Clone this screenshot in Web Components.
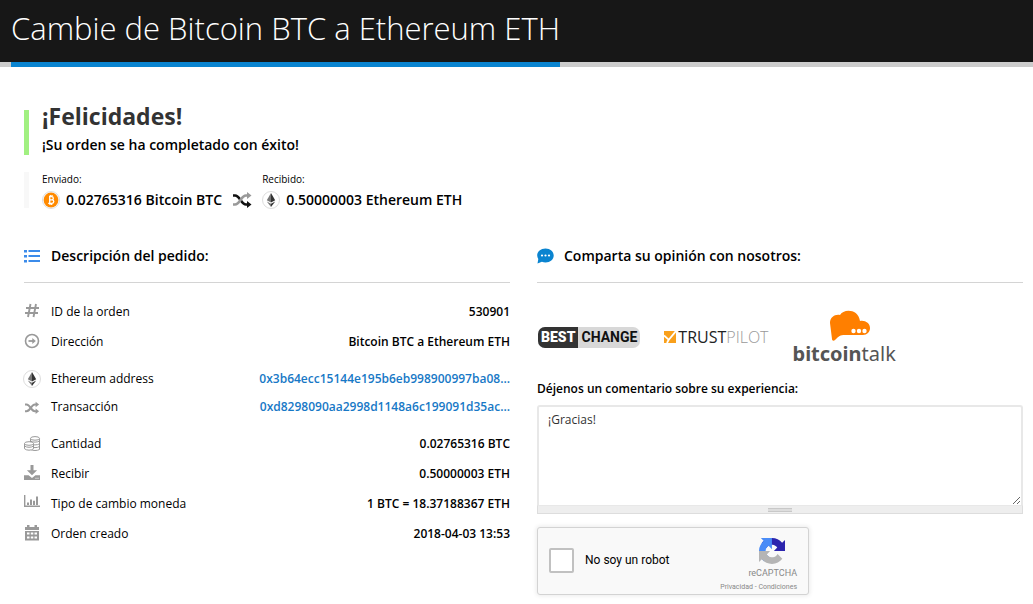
<!DOCTYPE html>
<html lang="es">
<head>
<meta charset="utf-8">
<meta name="viewport" content="width=device-width, initial-scale=1">
<title>Cambie de Bitcoin BTC a Ethereum ETH</title>
<style>
body { margin: 0; background: #fff; color: #000; font: 12px/20px "Open Sans", "Noto Sans", sans-serif; }
</style>
</head>
<body>
<order-page></order-page>
<script>
const define = (name, html, init) => {
  const template = document.createElement('template');
  template.innerHTML = html;
  customElements.define(name, class extends HTMLElement {
    constructor() {
      super();
      this.attachShadow({ mode: 'open' }).append(template.content.cloneNode(true));
    }
    connectedCallback() { if (init) init(this, this.shadowRoot); }
  });
};

const ethereum = `<circle cx="9" cy="9" r="8.5" fill="#fff" stroke="#ddd"/>
  <path d="M9 2 4.8 9.2 9 11.5Z" fill="#777"/><path d="M9 2v9.500l4.200-2.300Z" fill="#333"/>
  <path d="M4.800 10.400 9 16v-3.300Z" fill="#777"/><path d="M13.200 10.400 9 16v-3.300Z" fill="#333"/>`;

const shuffle = (a, b) => `<g fill="none" stroke-width="2.600">
  <path stroke="${b}" d="M0 4.500h2C7 4.500 8 13.500 13 13.500H15"/>
  <path stroke="${a}" d="M0 13.500h2C7 13.500 8 4.500 13 4.500H15"/></g>
  <path fill="${a}" d="M14 .9 18.500 4.500 14 8.100z"/><path fill="${b}" d="M14 9.900l4.500 3.600L14 17.100z"/>`;

const icons = {
  bitcoin: `<circle cx="9" cy="9" r="8.500" fill="#fff" stroke="#ddd"/><circle cx="9" cy="9" r="7.400" fill="#ff8a00"/>
    <g fill="none" stroke="#fff" stroke-width="1.300"><path d="M7 5.600h2.700a1.600 1.600 0 0 1 0 3.200H7.600 10a1.800 1.800 0 0 1 0 3.600H6.200M7.700 5.600v6.800M8.300 4v1.800M10 4v1.800M8 12.200V14M9.700 12.200V14"/></g>`,
  ethereum,
  swap: shuffle('#999', '#111'),
  shuffle: `<g transform="translate(2 3) scale(.76)">${shuffle('#999', '#999')}</g>`,
  list: `<g fill="#3b8bea"><path d="M1 3h3v2.500H1zM1 8h3v2.500H1zM1 13h3v2.500H1zM5.500 3H17v2H5.500zM5.500 8H17v2H5.500zM5.500 13H17v2H5.500z"/></g>`,
  comment: `<path fill="#0a84d0" d="M9.500 1.500c4.700 0 8.200 3 8.200 7s-3.500 7-8.200 7c-1.300 0-2.500-.2-3.600-.7L1.500 16.600l.8-4.500C1.600 11 1.200 9.800 1.200 8.500c0-4 3.600-7 8.300-7z"/><g fill="#fff"><circle cx="6" cy="8.500" r="1.100"/><circle cx="9.500" cy="8.500" r="1.100"/><circle cx="13" cy="8.500" r="1.100"/></g>`,
  hash: `<path fill="none" stroke="#999" stroke-width="1.900" d="M7.500 1 5 14M13 1l-2.500 13M3 5h13M2 10h13"/>`,
  arrow: `<circle cx="9" cy="8" r="6.500" fill="none" stroke="#999" stroke-width="1.600"/><path fill="none" stroke="#999" stroke-width="1.800" d="M5.500 8H11"/><path fill="#999" d="m9.300 4.900 3.500 3.100-3.500 3.100z"/>`,
  coins: `<g fill="#fff" stroke="#999"><path d="M7.500 3.500v11c2 1.300 7 1.300 9 0v-11"/><path d="M7.500 8.800c2 1.500 7 1.500 9 0M7.500 11.500c2 1.500 7 1.500 9 0M7.500 6c2 1.500 7 1.500 9 0" fill="none"/><ellipse cx="12" cy="3.400" rx="4.500" ry="1.800"/><path d="M1.500 8.500v5.200c2 2 7 2 9 0V8.500"/><path d="M1.500 11c2 1.700 7 1.700 9 0" fill="none"/><ellipse cx="6" cy="8.500" rx="4.500" ry="1.800"/></g>`,
  download: `<path fill="#999" d="M7.500 0h3v5.200h3.600L9 10.200 3.900 5.200h3.600z"/><path fill="#999" d="M1 10.200h4.600L9 13l3.400-2.800H17V15H1z"/><path fill="#fff" d="M12.500 12.700h1v1h-1zM14.500 12.700h1v1h-1z"/>`,
  chart: `<path fill="none" stroke="#999" stroke-width="1.400" d="M1.700 0v11.300H17"/><path fill="#999" d="M4 7.500h2V10H4zM7 4.500h2V10H7zM10 5.800h2V10h-2zM13 1.500h2V10h-2z"/>`,
  calendar: `<path fill="#999" d="M4 0h2.500v2h5V0H14v2h2v3H2V2h2zM2 6h14v9.500H2z"/><path fill="#fff" d="M4 7.500h2.500v2H4zM7.800 7.500h2.500v2H7.800zM11.500 7.500H14v2h-2.500zM4 11.500h2.500v2H4zM7.800 11.500h2.500v2H7.800zM11.500 11.500H14v2h-2.500z"/>`
};

define('ui-icon', `<style>
  :host { display: inline-block; flex: none; width: 16px; height: 16px; }
  svg { display: block; width: 100%; height: 100%; overflow: visible; }
</style><svg viewBox="1 1 16 16" aria-hidden="true"></svg>`, (host, root) => {
  root.querySelector('svg').innerHTML = icons[host.getAttribute('name')];
});

define('page-title', `<style>
  :host { display: block; background: #171717; border-bottom: 5px solid #ccc; padding: 0 11px; }
  h1 { width: fit-content; margin: 0 0 -5px; padding: 4px 0 10px; border-bottom: 5px solid #0a84d0; color: #fff; font-size: 31px; line-height: 48px; font-weight: 300; }
</style><h1><slot></slot></h1>`);

define('order-success', `<style>
  :host { display: block; border-left: 5px solid #a1f081; padding-left: 13px; height: 45px; }
  h2 { margin: 0; font-size: 23px; line-height: 12px; font-weight: 700; color: #333; }
  p { margin: 13px 0 0; font-size: 14px; line-height: 20px; font-weight: 600; }
</style><h2><slot name="title"></slot></h2><p><slot></slot></p>`);

define('coin-amount', `<style>
  :host { display: block; }
  .label { display: block; font-size: 10px; line-height: 16px; padding-bottom: 1px; }
  .amount { display: flex; align-items: center; gap: 7px; padding-left: 1px; font-size: 14px; line-height: 24px; font-weight: 600; }
</style><span class="label"><slot name="label"></slot></span><span class="amount"><slot name="icon"></slot><slot></slot></span>`);

define('exchange-summary', `<style>
  :host { display: flex; align-items: flex-end; gap: 12px; margin-top: 17px; height: 36px; padding-left: 13px; border-left: 5px solid #f8f8f8; }
  coin-amount { margin-bottom: -4px; }
</style>
<coin-amount><span slot="label">Enviado:</span><ui-icon slot="icon" name="bitcoin"></ui-icon>0.02765316 Bitcoin BTC</coin-amount>
<ui-icon name="swap"></ui-icon>
<coin-amount><span slot="label">Recibido:</span><ui-icon slot="icon" name="ethereum"></ui-icon>0.50000003 Ethereum ETH</coin-amount>`);

define('section-heading', `<style>
  :host { display: flex; align-items: center; gap: 11px; padding-bottom: 16px; border-bottom: 1px solid #d4d4d4; }
  h3 { margin: 0; font-size: 14px; line-height: 20px; font-weight: 600; }
</style><slot name="icon"></slot><h3><slot></slot></h3>`);

define('order-details', `<style>
  :host { display: block; margin-top: 14px; }
  table { width: 100%; border-collapse: collapse; table-layout: fixed; }
  th, td { height: 30px; padding: 0; font-size: 12px; line-height: 18px; vertical-align: middle; }
  .links th, .links td { height: 28px; }
  .gap td { height: 8px; line-height: 8px; }
  th { width: 42%; font-weight: 400; }
  td { text-align: right; font-weight: 600; white-space: nowrap; }
  .name { display: flex; align-items: center; gap: 11px; }
  a { color: #1778c6; text-decoration: none; }
</style>
<table>
  <tbody>
    <tr><th scope="row"><span class="name"><ui-icon name="hash"></ui-icon>ID de la orden</span></th><td>530901</td></tr>
    <tr><th scope="row"><span class="name"><ui-icon name="arrow"></ui-icon>Dirección</span></th><td>Bitcoin BTC a Ethereum ETH</td></tr>
  </tbody>
  <tbody class="gap"><tr><td colspan="2"></td></tr></tbody>
  <tbody class="links">
    <tr><th scope="row"><span class="name"><ui-icon name="ethereum"></ui-icon>Ethereum address</span></th><td><a href="#address">0x3b64ecc15144e195b6eb998900997ba08...</a></td></tr>
    <tr><th scope="row"><span class="name"><ui-icon name="shuffle"></ui-icon>Transacción</span></th><td><a href="#transaction">0xd8298090aa2998d1148a6c199091d35ac...</a></td></tr>
  </tbody>
  <tbody class="gap"><tr><td colspan="2"></td></tr></tbody>
  <tbody>
    <tr><th scope="row"><span class="name"><ui-icon name="coins"></ui-icon>Cantidad</span></th><td>0.02765316 BTC</td></tr>
    <tr><th scope="row"><span class="name"><ui-icon name="download"></ui-icon>Recibir</span></th><td>0.50000003 ETH</td></tr>
    <tr><th scope="row"><span class="name"><ui-icon name="chart"></ui-icon>Tipo de cambio moneda</span></th><td>1 BTC = 18.37188367 ETH</td></tr>
    <tr><th scope="row"><span class="name"><ui-icon name="calendar"></ui-icon>Orden creado</span></th><td>2018-04-03 13:53</td></tr>
  </tbody>
</table>`);

define('review-links', `<style>
  :host { display: flex; align-items: center; gap: 24px; margin-top: 27px; height: 54px; }
  a { text-decoration: none; white-space: nowrap; }
  .best { display: flex; margin-left: 1px; border-radius: 7px; overflow: hidden; background: #d8d8d8; font: 700 14px/21px Roboto, sans-serif; color: #111; }
  .best b { background: #333; color: #fff; padding: 0 3px; }
  .best span { padding: 0 3px; }
  .trust { display: flex; align-items: center; gap: 2px; color: #222; font: 400 16px/20px "Open Sans", sans-serif; }
  .trust svg { width: 12px; height: 12px; }
  .trust span span { color: #999; font-weight: 300; }
  .talk { display: flex; flex-direction: column; align-items: center; padding-top: 2px; color: #555; font: 400 20px/24px "Noto Sans", sans-serif; }
  .talk svg { width: 42px; height: 32px; margin-left: 11px; }
</style>
<a class="best" href="#bestchange"><b>BEST</b><span>CHANGE</span></a>
<a class="trust" href="#trustpilot"><svg viewBox="0 0 12 12" aria-hidden="true"><path fill="#f9a01b" d="M0 0h12v12H0z"/><path fill="none" stroke="#fff" stroke-width="1.800" d="M0 4.500 4.800 8.800 12 0M4.800 8.500 3 12"/></svg><span>TRUST<span>PILOT</span></span></a>
<a class="talk" href="#bitcointalk"><svg viewBox="0 0 42 32" aria-hidden="true"><path fill="#ff7f00" d="M1 13C1 7 6 4 11 5c3-6 18-7 20 6 5-1 10 2 10 7 0 4-3 7-7 7H16c-5 0-6 1-10 5-1 1-3 1-3-1z"/><g fill="#fff"><circle cx="24.500" cy="21" r="2.200"/><circle cx="30" cy="21" r="2.200"/><circle cx="35.500" cy="21" r="2.200"/></g></svg><span><b>bitcoin</b>talk</span></a>`);

define('comment-box', `<style>
  :host { display: block; margin-top: 15px; }
  label { display: block; margin-bottom: 6px; font-size: 12px; line-height: 20px; font-weight: 600; }
  textarea { display: block; box-sizing: border-box; width: 100%; height: 100px; margin: 0; padding: 4px 9px; border: 2px solid #e8e8e8; border-bottom: 0; border-radius: 3px 3px 0 0; background: #fff; color: #333; font: 12px/18px "Open Sans", sans-serif; outline: 0; }
  .grip { display: flex; justify-content: center; align-items: center; height: 7px; border: 1px solid #ddd; border-top-color: #e8e8e8; background: #eee; }
  .grip i { box-sizing: border-box; width: 24px; height: 4px; border: solid #c8c8c8; border-width: 1px 0; background: #ddd; }
</style>
<label for="comment">Déjenos un comentario sobre su experiencia:</label>
<textarea id="comment">¡Gracias!</textarea>
<div class="grip"><i></i></div>`);

define('robot-check', `<style>
  :host { box-sizing: border-box; display: flex; justify-content: space-between; width: 272px; height: 68px; margin-top: 13px; border: 1px solid #d3d3d3; border-radius: 3px; background: #f9f9f9; box-shadow: 0 0 4px 1px rgba(0,0,0,.08); font-family: Roboto, sans-serif; }
  label { display: flex; align-items: center; gap: 11px; padding-left: 11px; padding-bottom: 2px; font-size: 12px; line-height: 18px; }
  input { appearance: none; box-sizing: border-box; width: 25px; height: 25px; margin: 0; border: 2px solid #c1c1c1; border-radius: 2px; background: #fff; }
  input:checked { background: #4a90e2; }
  .brand { display: flex; flex-direction: column; align-items: flex-end; padding: 10px 11px 0 0; color: #888; font-size: 9px; line-height: 14px; }
  svg { width: 28px; height: 28px; margin-right: 11px; }
  .name { margin-top: 2px; }
  .legal { font-size: 7px; line-height: 14px; }
  a { color: inherit; text-decoration: none; }
</style>
<label for="robot"><input type="checkbox" id="robot">No soy un robot</label>
<div class="brand">
  <svg viewBox="0 0 64 64" aria-hidden="true">
    <path fill="#2c25ae" d="M64 31.955l-.002-1.370V4.687l-7.160 7.160C50.978 4.674 42.033.093 32.030.093c-10.415 0-19.667 4.960-25.506 12.640l11.736 11.860a15.550 15.550 0 0 1 4.754-5.334c2.050-1.600 4.952-2.906 8.968-2.906.485 0 .860.057 1.135.163 4.976.393 9.288 3.140 11.828 7.124l-8.307 8.307z"/>
    <path fill="#4a8cf7" d="M31.862.094H4.594l7.160 7.160C4.580 13.117 0 22.060 0 32.064c0 10.415 4.960 19.667 12.640 25.506L24.500 45.835a15.550 15.550 0 0 1-5.334-4.754c-1.600-2.050-2.906-4.952-2.906-8.968 0-.485.057-.860.163-1.135.393-4.976 3.140-9.288 7.124-11.828l8.307 8.307z"/>
    <path fill="#b5b5b5" d="M0 32.045v27.268l7.160-7.160c5.860 7.173 14.804 11.754 24.808 11.754 10.415 0 19.667-4.960 25.506-12.640L45.740 39.406a15.550 15.550 0 0 1-4.754 5.334c-2.050 1.600-4.952 2.906-8.968 2.906-.485 0-.860-.057-1.135-.163-4.976-.393-9.288-3.140-11.828-7.124l8.307-8.307z"/>
  </svg>
  <span class="name">reCAPTCHA</span>
  <span class="legal"><a href="#privacidad">Privacidad</a> - <a href="#condiciones">Condiciones</a></span>
</div>`);

define('order-page', `<style>
  :host { display: block; }
  main { padding: 43px 10px 9px 24px; }
  .columns { display: grid; grid-template-columns: 1fr 1fr; gap: 27px; margin-top: 38px; }
  section { min-width: 0; }
</style>
<page-title>Cambie de Bitcoin BTC a Ethereum ETH</page-title>
<main>
  <order-success><span slot="title">¡Felicidades!</span>¡Su orden se ha completado con éxito!</order-success>
  <exchange-summary></exchange-summary>
  <div class="columns">
    <section>
      <section-heading><ui-icon slot="icon" name="list"></ui-icon>Descripción del pedido:</section-heading>
      <order-details></order-details>
    </section>
    <section>
      <section-heading><ui-icon slot="icon" name="comment"></ui-icon>Comparta su opinión con nosotros:</section-heading>
      <review-links></review-links>
      <comment-box></comment-box>
      <robot-check></robot-check>
    </section>
  </div>
</main>`);
</script>
</body>
</html>
